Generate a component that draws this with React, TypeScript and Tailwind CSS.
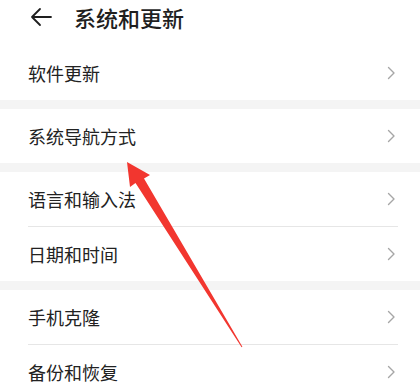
import React from 'react';

type Item = { label: string };

const groups: Item[][] = [
    [{ label: '软件更新' }],
    [{ label: '系统导航方式' }],
    [{ label: '语言和输入法' }, { label: '日期和时间' }],
    [{ label: '手机克隆' }, { label: '备份和恢复' }],
];

const Chevron = () => (
    <svg width="9" height="14" viewBox="0 0 9 14" fill="none" className="shrink-0">
        <path d="M1.5 1.5 L7 7 L1.5 12.5" stroke="#a6a6a6" strokeWidth="1.4" strokeLinecap="round" strokeLinejoin="round" />
    </svg>
);

const Row: React.FC<{ label: string; divider: boolean }> = ({ label, divider }) => (
    <div className="flex flex-col">
        <div className="h-[54px] flex items-center justify-between pl-[28px] pr-[24px]">
            <span className="text-[18px] text-[#222222] leading-none">{label}</span>
            <Chevron />
        </div>
        {divider && <div className="ml-[28px] mr-[22px] h-px bg-[#e6e6e6]" />}
    </div>
);

export default function App() {
    return (
        <div
            className="relative w-[420px] h-[388px] overflow-hidden bg-white"
            style={{ fontFamily: '"Noto Sans CJK SC", "Noto Sans", sans-serif' }}
        >
            {/* header */}
            <div className="h-[46px] flex items-center gap-[22px] pl-[30px] pb-[12px]">
                <svg width="22" height="20" viewBox="0 0 22 20" fill="none">
                    <path d="M21 10 H2 M10 2 L2 10 L10 18" stroke="#1f1f1f" strokeWidth="1.8" strokeLinecap="round" strokeLinejoin="round" />
                </svg>
                <span className="text-[22px] text-[#1f1f1f] leading-none font-medium">系统和更新</span>
            </div>

            {groups.map((g, gi) => (
                <div key={gi}>
                    {gi > 0 && <div className="h-[9px] bg-[#f4f4f4]" />}
                    {g.map((it, i) => (
                        <Row key={it.label} label={it.label} divider={i < g.length - 1} />
                    ))}
                </div>
            ))}

            {/* red annotation arrow */}
            <svg className="absolute left-0 top-0 pointer-events-none" width="420" height="388" viewBox="0 0 420 388">
                <polygon
                    points="127,162 150,175 144,178.5 242.4,346.7 241.6,347.3 135.5,183 130,187"
                    fill="#f2362f"
                />
            </svg>
        </div>
    );
}
